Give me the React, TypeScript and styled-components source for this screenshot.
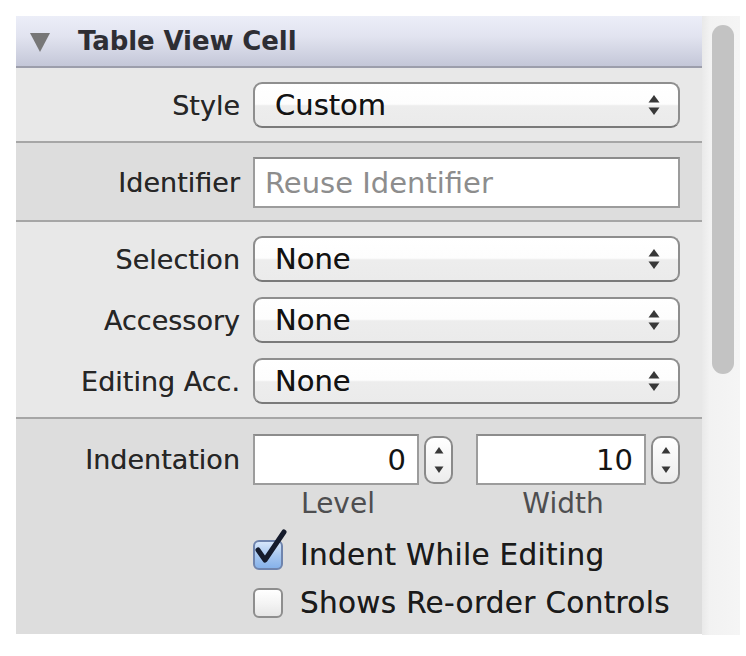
import styled, { createGlobalStyle } from 'styled-components'

const GlobalStyle = createGlobalStyle`
  html, body {
    margin: 0;
    padding: 0;
    background: #ffffff;
  }
  body {
    font-family: "DejaVu Sans", "Liberation Sans", sans-serif;
    color: #2a2a2a;
  }
`

function PopupArrows() {
  return (
    <svg width="14" height="24" viewBox="0 0 14 24">
      <path d="M7 2 L12.5 9.5 L1.5 9.5 Z" fill="#383838" />
      <path d="M7 22 L12.5 14.5 L1.5 14.5 Z" fill="#383838" />
    </svg>
  )
}

function StepperArrows() {
  return (
    <svg width="12" height="34" viewBox="0 0 12 34">
      <path d="M6 4 L10.5 10.5 L1.5 10.5 Z" fill="#383838" />
      <path d="M6 30 L10.5 23.5 L1.5 23.5 Z" fill="#383838" />
    </svg>
  )
}

function Popup({ value }: { value: string }) {
  return (
    <PopupButton>
      <span>{value}</span>
      <PopupArrows />
    </PopupButton>
  )
}

function Stepper() {
  return (
    <StepperBox>
      <StepperArrows />
    </StepperBox>
  )
}

function Checkbox({ checked, label }: { checked: boolean; label: string }) {
  return (
    <CheckRow>
      <CheckBox $checked={checked}>
        {checked && (
          <CheckMark width="40" height="44" viewBox="0 0 40 44">
            <path
              d="M6 22 L13 32 L32 4"
              fill="none"
              stroke="#151b2c"
              strokeWidth="5"
              strokeLinecap="round"
              strokeLinejoin="round"
            />
          </CheckMark>
        )}
      </CheckBox>
      <CheckLabel>{label}</CheckLabel>
    </CheckRow>
  )
}

export default function App() {
  return (
    <>
      <GlobalStyle />
      <Page>
        <Panel>
          <Header>
            <Disclosure />
            <HeaderTitle>Table View Cell</HeaderTitle>
          </Header>

          <Section $shade="light">
            <Row>
              <Label>Style</Label>
              <Popup value="Custom" />
            </Row>
          </Section>

          <Section $shade="dark" $padTop={14} $padBottom={12}>
            <Row>
              <Label>Identifier</Label>
              <TextField>
                <Placeholder>Reuse Identifier</Placeholder>
              </TextField>
            </Row>
          </Section>

          <Section $shade="light" $gap={15}>
            <Row>
              <Label>Selection</Label>
              <Popup value="None" />
            </Row>
            <Row>
              <Label>Accessory</Label>
              <Popup value="None" />
            </Row>
            <Row>
              <Label>Editing Acc.</Label>
              <Popup value="None" />
            </Row>
          </Section>

          <Section $shade="dark" $padTop={15} $padBottom={7} $last>
            <Row>
              <Label>Indentation</Label>
              <Pair>
                <NumberGroup>
                  <NumberField>0</NumberField>
                  <Stepper />
                </NumberGroup>
                <NumberGroup>
                  <NumberField>10</NumberField>
                  <Stepper />
                </NumberGroup>
              </Pair>
            </Row>
            <Row>
              <span />
              <Pair>
                <SubLabel>Level</SubLabel>
                <SubLabel>Width</SubLabel>
              </Pair>
            </Row>
            <Checks>
              <Row>
                <span />
                <Checkbox checked label="Indent While Editing" />
              </Row>
              <Row>
                <span />
                <Checkbox checked={false} label="Shows Re-order Controls" />
              </Row>
            </Checks>
          </Section>
        </Panel>

        <ScrollTrack>
          <ScrollThumb />
        </ScrollTrack>
      </Page>
    </>
  )
}

// ----- STYLES -----

const Page = styled.div`
  display: flex;
  align-items: flex-start;
  padding: 16px 0 0 16px;
  height: 656px;
  box-sizing: border-box;
`

const Panel = styled.div`
  width: 686px;
  display: flex;
  flex-direction: column;
`

const Header = styled.div`
  height: 52px;
  box-sizing: border-box;
  display: flex;
  align-items: center;
  padding-left: 14px;
  background: linear-gradient(#eceef8 0%, #e2e4f0 40%, #c4c7d8 100%);
  border-bottom: 2px solid #9c9eab;
`

const Disclosure = styled.span`
  width: 0;
  height: 0;
  border-left: 10px solid transparent;
  border-right: 10px solid transparent;
  border-top: 19px solid #777777;
  margin-right: 28px;
  margin-top: 2px;
`

const HeaderTitle = styled.span`
  font-size: 26px;
  font-weight: bold;
  color: #2e2e34;
  letter-spacing: -0.1px;
`

const Section = styled.div<{
  $shade: 'light' | 'dark'
  $padTop?: number
  $padBottom?: number
  $gap?: number
  $last?: boolean
}>`
  display: flex;
  flex-direction: column;
  gap: ${({ $gap }) => $gap ?? 0}px;
  background: ${({ $shade }) => ($shade === 'light' ? '#e8e8e8' : '#dddddd')};
  padding: ${({ $padTop }) => $padTop ?? 14}px 0 ${({ $padBottom }) => $padBottom ?? 13}px;
  border-bottom: ${({ $last }) => ($last ? 'none' : '2px solid #a6a6a6')};
`

const Row = styled.div`
  display: grid;
  grid-template-columns: 224px 427px;
  column-gap: 13px;
  align-items: center;
`

const Label = styled.span`
  text-align: right;
  font-size: 27px;
  color: #262626;
  white-space: nowrap;
  text-shadow: 0 0 0.4px rgba(0, 0, 0, 0.5);
`

const PopupButton = styled.div`
  height: 46px;
  box-sizing: border-box;
  display: flex;
  align-items: center;
  justify-content: space-between;
  padding: 0 17px 0 20px;
  border: 2px solid #8e8e8e;
  border-bottom-color: #7a7a7a;
  border-radius: 9px;
  background: linear-gradient(#ffffff 0%, #fdfdfd 48%, #ededed 52%, #ebebeb 100%);
  font-size: 29px;
  color: #121212;
  text-shadow: 0 0 0.4px rgba(0, 0, 0, 0.5);
`

const TextField = styled.div`
  height: 51px;
  box-sizing: border-box;
  display: flex;
  align-items: center;
  padding: 0 10px;
  background: #ffffff;
  border: 2px solid #9c9c9c;
  border-top-color: #8c8c8c;
`

const Placeholder = styled.span`
  font-size: 29px;
  color: #8d8d8d;
`

const Pair = styled.div`
  display: grid;
  grid-template-columns: 200px 204px;
  column-gap: 23px;
  align-items: center;
`

const NumberGroup = styled.div`
  display: flex;
  align-items: center;
  gap: 5px;
`

const NumberField = styled.div`
  flex: 1;
  height: 51px;
  box-sizing: border-box;
  display: flex;
  align-items: center;
  justify-content: flex-end;
  padding: 0 11px;
  background: #ffffff;
  border: 2px solid #9c9c9c;
  border-top-color: #8c8c8c;
  font-size: 29px;
  color: #141414;
`

const StepperBox = styled.div`
  width: 29px;
  height: 48px;
  box-sizing: border-box;
  display: flex;
  align-items: center;
  justify-content: center;
  border: 2px solid #8a8a8a;
  border-radius: 10px;
  background: linear-gradient(#ffffff 0%, #f6f6f6 50%, #ececec 100%);
`

const SubLabel = styled.span`
  text-align: center;
  padding-right: 30px;
  margin-top: 3px;
  line-height: 32px;
  font-size: 28px;
  color: #4e4e50;
`

const Checks = styled.div`
  display: flex;
  flex-direction: column;
  margin-top: 11px;
`

const CheckRow = styled.div`
  height: 48px;
  display: flex;
  align-items: center;
  gap: 17px;
`

const CheckBox = styled.span<{ $checked: boolean }>`
  position: relative;
  flex: none;
  width: 30px;
  height: 30px;
  box-sizing: border-box;
  border-radius: 6px;
  border: 2px solid ${({ $checked }) => ($checked ? '#6f84ad' : '#8e8e8e')};
  background: ${({ $checked }) =>
    $checked
      ? 'linear-gradient(#d6e6fa 0%, #a9c8f0 50%, #86b2ea 100%)'
      : 'linear-gradient(#ffffff 0%, #f4f4f4 50%, #e6e6e6 100%)'};
`

const CheckMark = styled.svg`
  position: absolute;
  left: -3px;
  top: -14px;
`

const CheckLabel = styled.span`
  font-size: 29.5px;
  letter-spacing: 0.3px;
  color: #1a1a1a;
  white-space: nowrap;
  text-shadow: 0 0 0.4px rgba(0, 0, 0, 0.5);
`

const ScrollTrack = styled.div`
  width: 38px;
  height: 619px;
  box-sizing: border-box;
  padding: 9px 6px 0 10px;
  background: linear-gradient(90deg, #e9e9e9 0%, #f2f2f2 20%, #f5f5f5 100%);
`

const ScrollThumb = styled.div`
  width: 22px;
  height: 349px;
  border-radius: 11px;
  background: #c3c3c3;
`
